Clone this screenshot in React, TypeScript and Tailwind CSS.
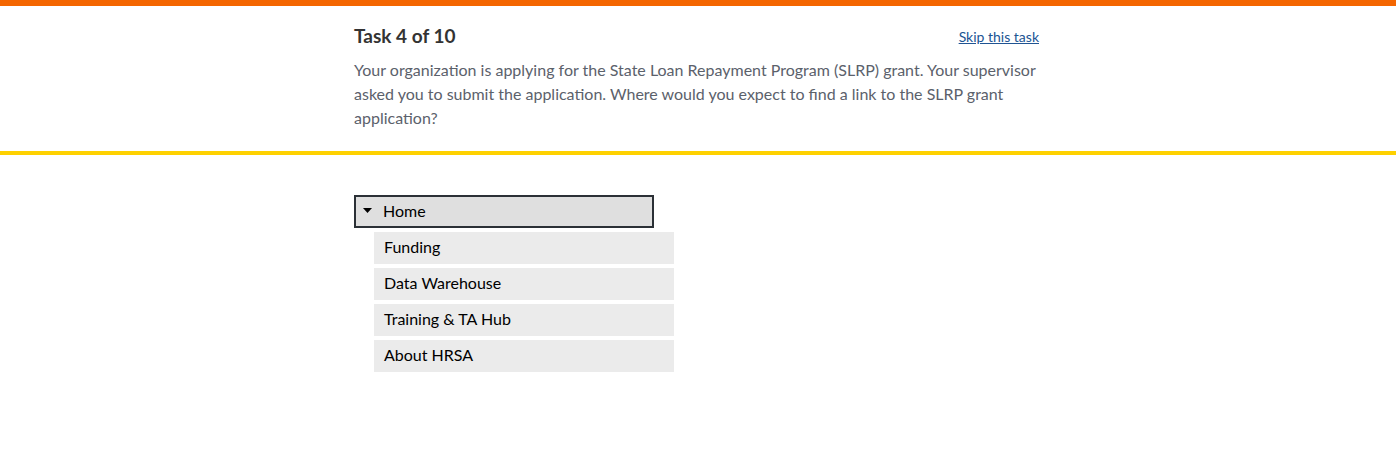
const children = ["Funding", "Data Warehouse", "Training & TA Hub", "About HRSA"];

export default function App() {
  return (
    <div className="min-h-screen bg-white font-['Lato','Helvetica',sans-serif]">
      <div className="h-[6px] bg-[#f46600]" />
      <header className="border-b-4 border-[#fed100]">
        <div className="mx-auto w-[688px] pt-[15px] pb-[21px]">
          <div className="flex items-center justify-between pr-[3px]">
            <h1 className="text-[19px] font-bold leading-[30px] text-[#333]">Task 4 of 10</h1>
            <a href="#" className="text-[14px] text-[#205493] underline">
              Skip this task
            </a>
          </div>
          <p className="mt-[7px] text-[16px] leading-[24px] text-[#5b616b]">
            Your organization is applying for the State Loan Repayment Program (SLRP) grant. Your supervisor
            asked you to submit the application. Where would you expect to find a link to the SLRP grant
            application?
          </p>
        </div>
      </header>
      <main className="mx-auto w-[688px] pt-[40px]">
        <button className="flex h-[33px] w-[300px] items-center gap-[11px] border-2 border-[#2b3036] bg-[#dfdfdf] pb-[2px] pl-[7px] text-[16px] text-black">
          <svg width="9" height="5" viewBox="0 0 9 5">
            <path d="M0 0h9L4.5 5z" fill="#000" />
          </svg>
          Home
        </button>
        <ul className="mt-[4px] flex flex-col gap-[4px] pl-[20px]">
          {children.map((c) => (
            <li
              key={c}
              className="flex h-[32px] w-[300px] items-center bg-[#ebebeb] pb-[2px] pl-[10px] text-[16px] text-black"
            >
              {c}
            </li>
          ))}
        </ul>
      </main>
    </div>
  );
}
